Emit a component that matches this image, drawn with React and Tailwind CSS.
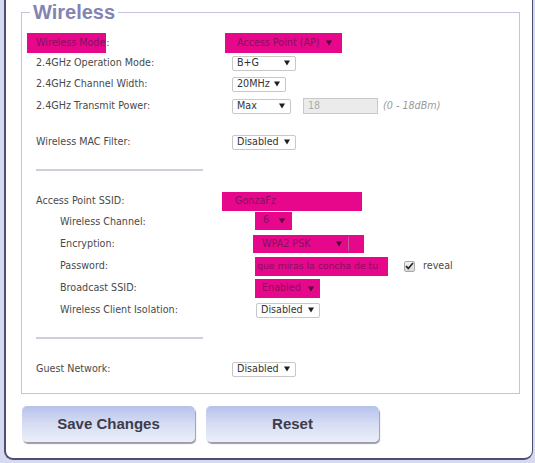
import React from 'react'

const verdana = "font-['DejaVu_Sans',Verdana,sans-serif]"

function Arrow({ color = '#1e1e1e' }) {
  return (
    <svg width="6" height="6" viewBox="0 0 6 6" className="shrink-0">
      <path d="M0 0.5h6L3 5.5z" fill={color} />
    </svg>
  )
}

function Select({ className = '', children }) {
  return (
    <div className={`flex h-[15px] items-center justify-between rounded-[2px] border border-[#c8c8c8] bg-white pl-[4px] pr-[5px] text-[#333] ${className}`}>
      <span>{children}</span>
      <Arrow />
    </div>
  )
}

// the magenta scribbles laid over the private fields
function Scribble({ className = '', children, arrow, sep }) {
  return (
    <div className={`flex items-center overflow-hidden whitespace-nowrap bg-[#e6078b] text-[#84125f] ${className}`}>
      <span>{children}</span>
      {arrow && <span className="ml-auto flex items-center"><Arrow color="#4a0635" /></span>}
      {sep && <span className="ml-[6px] mr-[15px] h-[14px] w-px bg-[#c45a9a]" />}
    </div>
  )
}

function Row({ label, h, indent, children, className = '' }) {
  return (
    <div className={`flex items-center ${h} ${className}`}>
      <div className={`w-[196px] shrink-0 ${indent ? 'pl-[24px]' : ''}`}>{label}</div>
      <div className={`flex items-center ${indent ? 'pl-[24px]' : ''}`}>{children}</div>
    </div>
  )
}

function Btn({ children }) {
  return (
    <button className="h-[36px] w-[173px] rounded-[5px] bg-gradient-to-b from-[#b6c2ea] via-[#d6ddf3] to-[#eceff8] font-['Liberation_Sans',Arial,sans-serif] text-[15px] font-bold text-[#3c3c4c] shadow-[1px_2px_1px_#9c9cac]">
      {children}
    </button>
  )
}

export default function App() {
  return (
    <div className="h-[463px] w-[535px] overflow-hidden bg-[#d6daf0]">
      <div className={`ml-[4px] h-[460px] w-[529px] rounded-b-[9px] border-b-2 border-l-2 border-r border-[#4e4e72] bg-white pt-[1px] ${verdana} text-[9.6px] text-[#4a4a4a]`}>
        <fieldset className="ml-[15px] w-[499px] border border-[#c4c4e2]">
          <legend className="ml-[8px] px-[3px] font-['Liberation_Sans',Arial,sans-serif] text-[20px] font-bold leading-[23px] text-[#8383b4]">Wireless</legend>
          <div className="px-[14px] pb-[14px] pt-[9px]">
            <Row h="h-[20px]" label={<span><span className="-ml-[9px] inline-block h-[20px] bg-[#e6078b] pl-[9px] pr-[1px] leading-[20px] text-[#84125f]">Wireless Mode</span>:</span>}>
              <Scribble arrow className="-ml-[7px] h-[20px] w-[117px] pl-[12px] pr-[10px]">Access Point (AP)</Scribble>
            </Row>
            <Row h="h-[20px]" label="2.4GHz Operation Mode:">
              <Select className="w-[64px]">B+G</Select>
            </Row>
            <Row h="h-[22px]" label="2.4GHz Channel Width:">
              <Select className="w-[54px]">20MHz</Select>
            </Row>
            <Row h="h-[22px]" label="2.4GHz Transmit Power:">
              <Select className="w-[59px]">Max</Select>
              <div className="ml-[12px] flex h-[16px] w-[75px] items-center border border-[#c8c8c8] bg-[#ebebeb] pl-[4px] text-[#ababab]">18</div>
              <span className="ml-[5px] italic text-[#9a9a9a]">(0 - 18dBm)</span>
            </Row>
            <Row h="h-[20px]" className="mt-[15px]" label="Wireless MAC Filter:">
              <Select className="w-[64px]">Disabled</Select>
            </Row>

            <div className="mt-[17px] h-[2px] w-[167px] bg-[#cfcfdc]" />

            <Row h="h-[20px]" className="mt-[20px]" label="Access Point SSID:">
              <Scribble className="-ml-[10px] h-[19px] w-[140px] pl-[13px]">GonzaFz</Scribble>
            </Row>
            <Row h="h-[22px]" indent label="Wireless Channel:">
              <Scribble arrow className="-mt-[3px] -ml-[1px] h-[18px] w-[37px] pl-[8px] pr-[7px]">6</Scribble>
            </Row>
            <Row h="h-[22px]" indent label="Encryption:">
              <Scribble arrow sep className="-ml-[3px] h-[18px] w-[111px] pl-[9px]">WPA2 PSK</Scribble>
            </Row>
            <Row h="h-[22px]" indent label="Password:">
              <Scribble className="-ml-[1px] h-[19px] w-[133px] pl-[2px] text-[9.3px]">que miras la concha de tu</Scribble>
              <div className="ml-[16px] flex h-[11px] w-[11px] items-center justify-center rounded-[2px] border border-[#a8a8a8] bg-gradient-to-b from-[#f4f4f4] to-[#d8d8d8]">
                <svg width="9" height="8" viewBox="0 0 9 8"><path d="M1 4.2l2.3 2.3L8 1" fill="none" stroke="#2a2a2a" strokeWidth="1.8" /></svg>
              </div>
              <span className="ml-[8px]">reveal</span>
            </Row>
            <Row h="h-[23px]" indent label="Broadcast SSID:">
              <Scribble arrow className="-ml-[1px] h-[19px] w-[65px] pl-[7px] pr-[6px]">Enabled</Scribble>
            </Row>
            <Row h="h-[20px]" indent label="Wireless Client Isolation:">
              <Select className="w-[64px]">Disabled</Select>
            </Row>

            <div className="mt-[17px] h-[2px] w-[167px] bg-[#cfcfdc]" />

            <Row h="h-[20px]" className="mt-[20px]" label="Guest Network:">
              <Select className="w-[64px]">Disabled</Select>
            </Row>
          </div>
        </fieldset>

        <div className="ml-[16px] mt-[12px] flex gap-[11px]">
          <Btn>Save Changes</Btn>
          <Btn>Reset</Btn>
        </div>
      </div>
    </div>
  )
}
